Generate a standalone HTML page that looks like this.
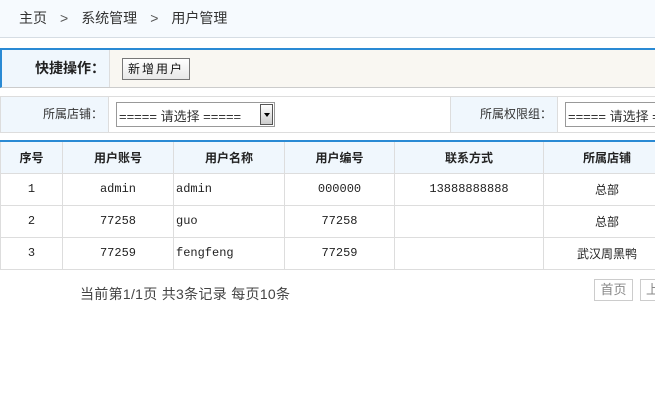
<!DOCTYPE html>
<html><head><meta charset="utf-8"><style>
*{margin:0;padding:0;box-sizing:border-box}
body{width:655px;height:413px;overflow:hidden;background:#fff;font-family:"Liberation Sans","Noto Sans CJK SC",sans-serif;font-size:12px;color:#333;position:relative}
.abs{position:absolute}
.bc{left:0;top:0;width:655px;height:38px;background:#f6fafe;border-bottom:1px solid #d6dde4;font-size:14px;color:#333;line-height:37px;padding-left:19px}
.bc span{margin:0 13px;color:#555}
.q{left:0;top:48px;width:660px;height:40px;border:1px solid #ccc;border-top:2px solid #2a8ad4;border-left:2px solid #2a8ad4;background:#f9f7f2}
.q .l{position:absolute;left:0;top:0;width:108px;height:37px;background:#f0f7fd;border-right:1px solid #ddd;font-weight:bold;font-size:14px;text-align:right;padding-right:4px;line-height:36px;color:#222}
.btn{position:absolute;left:120px;top:8px;width:68px;height:22px;border:1px solid #777;background:linear-gradient(#fff,#e8e8e8);font-size:12px;letter-spacing:2px;text-align:center;line-height:20px;color:#111}
.f{left:0;top:96px;width:660px;height:37px;border:1px solid #ddd}
.fl{position:absolute;top:0;height:35px;background:#f0f7fd;text-align:right;line-height:34px;font-size:12px;border-right:1px solid #ddd}
.sel{position:absolute;top:5px;height:25px;border:1px solid #999;background:#fff;font-size:13px;line-height:27px;padding-left:2px;font-family:"Liberation Sans","Noto Sans CJK SC",sans-serif;white-space:nowrap;overflow:hidden}
.arr{position:absolute;right:1px;top:1px;width:13px;height:21px;border:1px solid #555;background:linear-gradient(#fff,#ccc)}
.arr:after{content:"";position:absolute;left:3px;top:8px;border:3px solid transparent;border-top:4px solid #000}
table{position:absolute;left:0;top:140px;border-collapse:collapse;width:670px;table-layout:fixed}
th{height:32px;background:#f0f7fd;border:1px solid #ddd;border-top:2px solid #2a8ad4;font-size:12px;font-weight:bold;color:#222}
td{height:32px;border:1px solid #ddd;text-align:center;font-family:"Liberation Mono","Noto Sans CJK SC",monospace;font-size:12px;color:#222}
td.l{text-align:left;padding-left:2px}
td.cn{font-family:"Liberation Sans","Noto Sans CJK SC",sans-serif}
.pg{left:80px;top:284px;font-size:14px;color:#444;letter-spacing:0.3px}
.pb{top:279px;height:22px;border:1px solid #ccc;font-size:13px;color:#888;line-height:20px;text-align:center}
</style></head><body>
<div class="abs bc">主页<span>&gt;</span>系统管理<span>&gt;</span>用户管理</div>
<div class="abs q"><div class="l">快捷操作：</div><div class="btn">新增用户</div></div>
<div class="abs f">
<div class="fl" style="left:0;width:108px;padding-right:5px">所属店铺：</div>
<div class="sel" style="left:115px;width:159px">===== 请选择 =====<div class="arr"></div></div>
<div class="fl" style="left:449px;width:108px;padding-right:5px;border-left:1px solid #ddd">所属权限组：</div>
<div class="sel" style="left:564px;width:120px">===== 请选择 =====</div>
</div>
<table>
<colgroup><col style="width:62px"><col style="width:111px"><col style="width:111px"><col style="width:110px"><col style="width:149px"><col style="width:127px"></colgroup>
<tr><th>序号</th><th>用户账号</th><th>用户名称</th><th>用户编号</th><th>联系方式</th><th>所属店铺</th></tr>
<tr><td>1</td><td>admin</td><td class="l">admin</td><td>000000</td><td>13888888888</td><td class="cn">总部</td></tr>
<tr><td>2</td><td>77258</td><td class="l">guo</td><td>77258</td><td></td><td class="cn">总部</td></tr>
<tr><td>3</td><td>77259</td><td class="l">fengfeng</td><td>77259</td><td></td><td class="cn">武汉周黑鸭</td></tr>
</table>
<div class="abs pg">当前第1/1页 共3条记录 每页10条</div>
<div class="abs pb" style="left:594px;width:39px">首页</div>
<div class="abs pb" style="left:640px;width:30px;text-align:left;padding-left:5px">上</div>
</body></html>
